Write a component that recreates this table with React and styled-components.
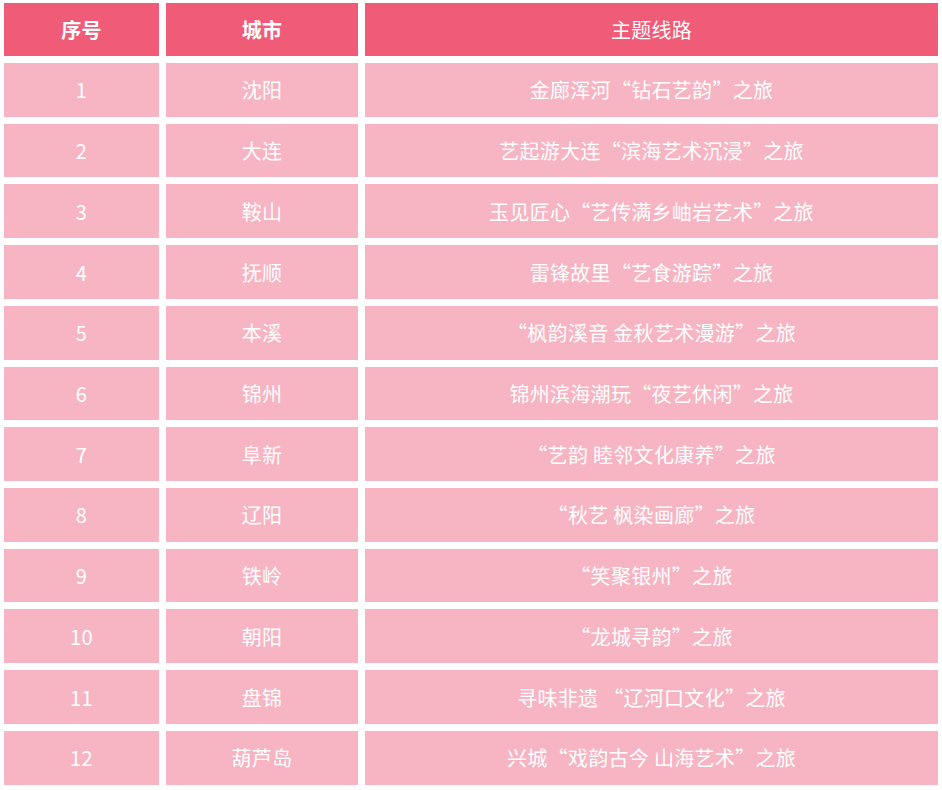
import React from "react";
import styled, { createGlobalStyle } from "styled-components";

const Global = createGlobalStyle`
  html, body { margin: 0; padding: 0; background: #fff; }
  body { font-family: "Noto Sans CJK SC", "Noto Sans", sans-serif; }
`;

const Table = styled.div`
  display: grid;
  grid-template-columns: 155px 192px 573px;
  grid-template-rows: 53px repeat(12, 53.73px);
  column-gap: 7px;
  row-gap: 7px;
  padding: 3px 4px;
  width: 934px;
`;

const Cell = styled.div`
  display: flex;
  align-items: center;
  justify-content: center;
  background: ${(p) => (p.$head ? "#f05c78" : "#f7b4c2")};
  color: #fff;
  font-size: 20px;
  font-weight: ${(p) => (p.$bold ? 700 : 400)};
  white-space: pre;
  letter-spacing: 0.3px;
`;

const rows = [
  ["1", "沈阳", "金廊浑河“钻石艺韵”之旅"],
  ["2", "大连", "艺起游大连“滨海艺术沉浸”之旅"],
  ["3", "鞍山", "玉见匠心“艺传满乡岫岩艺术”之旅"],
  ["4", "抚顺", "雷锋故里“艺食游踪”之旅"],
  ["5", "本溪", "“枫韵溪音 金秋艺术漫游”之旅"],
  ["6", "锦州", "锦州滨海潮玩“夜艺休闲”之旅"],
  ["7", "阜新", "“艺韵 睦邻文化康养”之旅"],
  ["8", "辽阳", "“秋艺 枫染画廊”之旅"],
  ["9", "铁岭", "“笑聚银州”之旅"],
  ["10", "朝阳", "“龙城寻韵”之旅"],
  ["11", "盘锦", "寻味非遗 “辽河口文化”之旅"],
  ["12", "葫芦岛", "兴城“戏韵古今 山海艺术”之旅"],
];

export default function App() {
  return (
    <>
      <Global />
      <Table>
        <Cell $head $bold>序号</Cell>
        <Cell $head $bold>城市</Cell>
        <Cell $head>主题线路</Cell>
        {rows.map(([n, c, t]) => (
          <React.Fragment key={n}>
            <Cell>{n}</Cell>
            <Cell>{c}</Cell>
            <Cell>{t}</Cell>
          </React.Fragment>
        ))}
      </Table>
    </>
  );
}
